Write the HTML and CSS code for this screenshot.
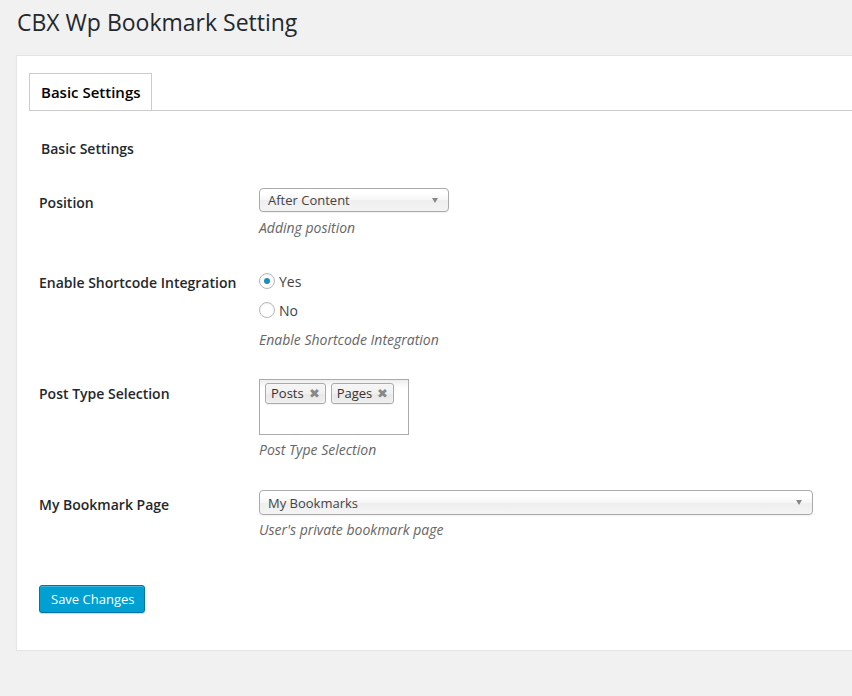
FILE: index.html
```html
<!DOCTYPE html>
<html>
<head>
<meta charset="utf-8">
<link rel="stylesheet" href="styles.css">
</head>
<body>
<div class="wrap">
  <h1 class="title">CBX Wp Bookmark Setting</h1>
  <div class="card">
    <div class="tabs">
      <div class="tab">Basic Settings</div>
    </div>
    <h2 class="section">Basic Settings</h2>
    <div class="form">
      <div class="row">
        <div class="label">Position</div>
        <div class="field">
          <div class="select short"><span>After Content</span><span class="arrow"></span></div>
          <p class="desc">Adding position</p>
        </div>
      </div>
      <div class="row">
        <div class="label">Enable Shortcode Integration</div>
        <div class="field">
          <div class="radio-line"><span class="radio checked"></span>Yes</div>
          <div class="radio-line second"><span class="radio"></span>No</div>
          <p class="desc radios">Enable Shortcode Integration</p>
        </div>
      </div>
      <div class="row posts">
        <div class="label">Post Type Selection</div>
        <div class="field">
          <div class="multi">
            <span class="chip">Posts <span class="x">✖</span></span>
            <span class="chip">Pages <span class="x">✖</span></span>
          </div>
          <p class="desc tight">Post Type Selection</p>
        </div>
      </div>
      <div class="row">
        <div class="label">My Bookmark Page</div>
        <div class="field">
          <div class="select long"><span>My Bookmarks</span><span class="arrow"></span></div>
          <p class="desc tight">User's private bookmark page</p>
        </div>
      </div>
    </div>
    <button class="save">Save Changes</button>
  </div>
</div>
</body>
</html>
```
FILE: styles.css
```css
html, body {
  margin: 0;
  padding: 0;
  background: #f1f1f1;
  font-family: "Open Sans", "Noto Sans", sans-serif;
  color: #23282d;
  overflow: hidden;
}
.wrap {
  padding-left: 16px;
}
.title {
  margin: 0;
  padding: 8px 0 0 1px;
  font-size: 23px;
  font-weight: 400;
  line-height: 29px;
  height: 47px;
  color: #23282d;
}
.card {
  background: #fff;
  border: 1px solid #e5e5e5;
  box-shadow: 0 1px 1px rgba(0,0,0,.04);
  margin-right: -20px;
  padding: 17px 12px 37px 12px;
}
.tabs {
  display: flex;
  border-bottom: 1px solid #ccc;
}
.tab {
  border: 1px solid #ccc;
  border-bottom: none;
  background: #fff;
  height: 36px;
  line-height: 36px;
  padding: 0 10px 0 11px;
  font-size: 15px;
  font-weight: 600;
  color: #000;
}
.section {
  margin: 28px 0 14px 0;
  padding-left: 12px;
  font-size: 14px;
  font-weight: 600;
  line-height: 20px;
  color: #23282d;
}
.form {
  display: flex;
  flex-direction: column;
}
.row {
  display: grid;
  grid-template-columns: 220px 1fr;
  padding: 15px 0;
}
.row.posts { padding-top: 14px; }
.label {
  padding: 5px 0 0 10px;
  font-size: 14px;
  font-weight: 600;
  line-height: 20px;
  color: #23282d;
}
.field {
  padding-left: 10px;
}
.select {
  box-sizing: border-box;
  height: 24px;
  border: 1px solid #aaa;
  border-radius: 4px;
  background: linear-gradient(#ffffff 20%, #f6f6f6 50%, #eeeeee 52%, #f4f4f4 100%);
  display: flex;
  align-items: center;
  justify-content: space-between;
  padding: 0 10px 0 8px;
  font-size: 13px;
  color: #444;
  box-shadow: 0 1px 1px rgba(0,0,0,.06);
}
.select.short { width: 190px; }
.select.long { width: 554px; height: 25px; }
.arrow {
  width: 0;
  height: 0;
  border-left: 3.5px solid transparent;
  border-right: 3.5px solid transparent;
  border-top: 5px solid #888;
}
.desc {
  margin: 6px 0 0 0;
  font-size: 14px;
  font-style: italic;
  line-height: 20px;
  color: #666;
}
.desc.radios { margin-top: 7px; }
.desc.tight { margin-top: 5px; }
.radio-line {
  display: flex;
  align-items: center;
  height: 26px;
  font-size: 14px;
  color: #444;
}
.radio-line.second { margin-top: 3px; }
.radio {
  box-sizing: border-box;
  width: 16px;
  height: 16px;
  border: 1px solid #b4b9be;
  border-radius: 50%;
  background: #fff;
  box-shadow: inset 0 1px 2px rgba(0,0,0,.07);
  margin: 0 4px 0 0;
  display: flex;
  align-items: center;
  justify-content: center;
}
.radio.checked::after {
  content: "";
  width: 6px;
  height: 6px;
  border-radius: 50%;
  background: #1e8cbe;
}
.multi {
  box-sizing: border-box;
  width: 150px;
  height: 56px;
  border: 1px solid #aaa;
  background: linear-gradient(#eeeeee 1%, #ffffff 15%);
  padding: 3px 5px;
  display: flex;
  align-items: flex-start;
  gap: 5px;
}
.chip {
  box-sizing: border-box;
  height: 21px;
  border: 1px solid #aaa;
  border-radius: 3px;
  background: linear-gradient(#f4f4f4 20%, #f0f0f0 50%, #e8e8e8 52%, #eeeeee 100%);
  box-shadow: 0 0 2px #fff inset, 0 1px 0 rgba(0,0,0,.05);
  padding: 0 5px 0 5px;
  font-size: 13px;
  line-height: 19px;
  color: #333;
  display: flex;
  align-items: center;
  gap: 5px;
}
.x {
  font-size: 13px;
  color: #888;
  line-height: 19px;
}
.save {
  display: block;
  margin: 30px 0 0 10px;
  height: 28px;
  padding: 0 10px 0 11px;
  background: #00a0d2;
  border: 1px solid #0073aa;
  border-radius: 3px;
  box-shadow: inset 0 1px 0 rgba(120,200,230,.5), 0 1px 0 rgba(0,0,0,.15);
  color: #fff;
  font-family: "Open Sans", "Noto Sans", sans-serif;
  font-size: 13px;
  line-height: 26px;
}
```
